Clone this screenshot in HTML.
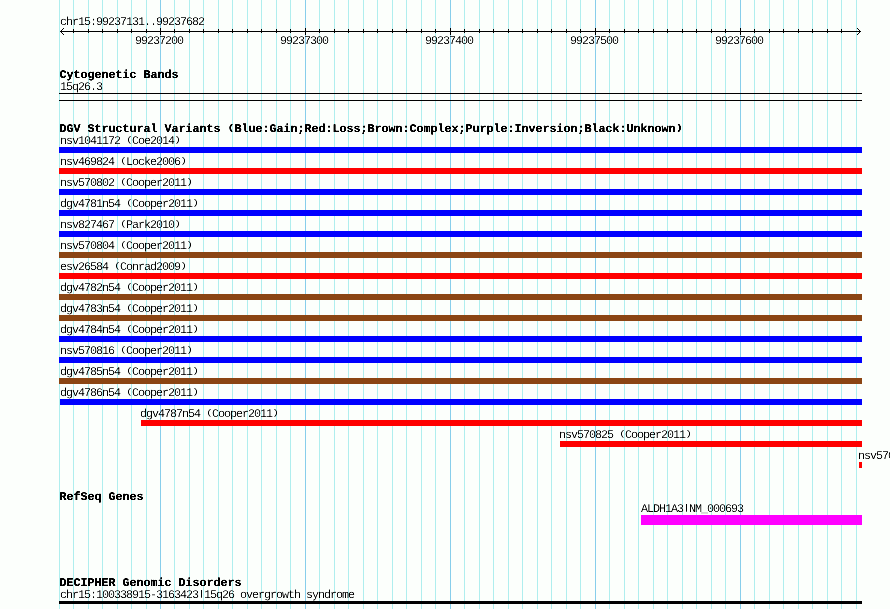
<!DOCTYPE html>
<html><head><meta charset="utf-8"><style>
html,body{margin:0;padding:0}
body{width:890px;height:609px;overflow:hidden;position:relative;background:#fcfffc;text-rendering:geometricPrecision}
svg{position:absolute;left:0;top:0}
.s,.b{position:absolute;white-space:pre;line-height:14px;color:#000;transform-origin:0 0}
.p{display:inline-block;transform:scaleY(0.72);transform-origin:50% 4.5px}
#ts,#tb{position:absolute;left:0;top:0;width:890px;height:609px}
#ts{filter:url(#ths)}
#tb{filter:url(#thb)}
.s{font:11.75px/14px "Liberation Mono",monospace;letter-spacing:-1.05px}
.b{font:bold 11.75px/14px "Liberation Mono",monospace;letter-spacing:-0.05px}
</style></head><body>
<svg width="890" height="609" shape-rendering="crispEdges">
<rect x="59" y="0" width="1" height="609" fill="#afeeee"/>
<rect x="73" y="0" width="1" height="609" fill="#afeeee"/>
<rect x="88" y="0" width="1" height="609" fill="#afeeee"/>
<rect x="102" y="0" width="1" height="609" fill="#afeeee"/>
<rect x="117" y="0" width="1" height="609" fill="#afeeee"/>
<rect x="131" y="0" width="1" height="609" fill="#afeeee"/>
<rect x="146" y="0" width="1" height="609" fill="#afeeee"/>
<rect x="160" y="0" width="1" height="609" fill="#87ceeb"/>
<rect x="174" y="0" width="1" height="609" fill="#afeeee"/>
<rect x="189" y="0" width="1" height="609" fill="#afeeee"/>
<rect x="203" y="0" width="1" height="609" fill="#afeeee"/>
<rect x="218" y="0" width="1" height="609" fill="#afeeee"/>
<rect x="232" y="0" width="1" height="609" fill="#afeeee"/>
<rect x="247" y="0" width="1" height="609" fill="#afeeee"/>
<rect x="261" y="0" width="1" height="609" fill="#afeeee"/>
<rect x="276" y="0" width="1" height="609" fill="#afeeee"/>
<rect x="290" y="0" width="1" height="609" fill="#afeeee"/>
<rect x="305" y="0" width="1" height="609" fill="#87ceeb"/>
<rect x="319" y="0" width="1" height="609" fill="#afeeee"/>
<rect x="334" y="0" width="1" height="609" fill="#afeeee"/>
<rect x="348" y="0" width="1" height="609" fill="#afeeee"/>
<rect x="363" y="0" width="1" height="609" fill="#afeeee"/>
<rect x="377" y="0" width="1" height="609" fill="#afeeee"/>
<rect x="392" y="0" width="1" height="609" fill="#afeeee"/>
<rect x="406" y="0" width="1" height="609" fill="#afeeee"/>
<rect x="421" y="0" width="1" height="609" fill="#afeeee"/>
<rect x="435" y="0" width="1" height="609" fill="#afeeee"/>
<rect x="450" y="0" width="1" height="609" fill="#87ceeb"/>
<rect x="464" y="0" width="1" height="609" fill="#afeeee"/>
<rect x="479" y="0" width="1" height="609" fill="#afeeee"/>
<rect x="493" y="0" width="1" height="609" fill="#afeeee"/>
<rect x="508" y="0" width="1" height="609" fill="#afeeee"/>
<rect x="522" y="0" width="1" height="609" fill="#afeeee"/>
<rect x="537" y="0" width="1" height="609" fill="#afeeee"/>
<rect x="551" y="0" width="1" height="609" fill="#afeeee"/>
<rect x="566" y="0" width="1" height="609" fill="#afeeee"/>
<rect x="580" y="0" width="1" height="609" fill="#afeeee"/>
<rect x="595" y="0" width="1" height="609" fill="#87ceeb"/>
<rect x="609" y="0" width="1" height="609" fill="#afeeee"/>
<rect x="624" y="0" width="1" height="609" fill="#afeeee"/>
<rect x="638" y="0" width="1" height="609" fill="#afeeee"/>
<rect x="653" y="0" width="1" height="609" fill="#afeeee"/>
<rect x="667" y="0" width="1" height="609" fill="#afeeee"/>
<rect x="682" y="0" width="1" height="609" fill="#afeeee"/>
<rect x="696" y="0" width="1" height="609" fill="#afeeee"/>
<rect x="711" y="0" width="1" height="609" fill="#afeeee"/>
<rect x="725" y="0" width="1" height="609" fill="#afeeee"/>
<rect x="740" y="0" width="1" height="609" fill="#87ceeb"/>
<rect x="754" y="0" width="1" height="609" fill="#afeeee"/>
<rect x="769" y="0" width="1" height="609" fill="#afeeee"/>
<rect x="783" y="0" width="1" height="609" fill="#afeeee"/>
<rect x="798" y="0" width="1" height="609" fill="#afeeee"/>
<rect x="812" y="0" width="1" height="609" fill="#afeeee"/>
<rect x="827" y="0" width="1" height="609" fill="#afeeee"/>
<rect x="841" y="0" width="1" height="609" fill="#afeeee"/>
<rect x="856" y="0" width="1" height="609" fill="#afeeee"/>
<rect x="60" y="31" width="801" height="1" fill="#000"/>
<rect x="60" y="31" width="1" height="1" fill="#000"/>
<rect x="60" y="31" width="1" height="1" fill="#000"/>
<rect x="860" y="31" width="1" height="1" fill="#000"/>
<rect x="860" y="31" width="1" height="1" fill="#000"/>
<rect x="61" y="30" width="1" height="1" fill="#000"/>
<rect x="61" y="32" width="1" height="1" fill="#000"/>
<rect x="859" y="30" width="1" height="1" fill="#000"/>
<rect x="859" y="32" width="1" height="1" fill="#000"/>
<rect x="62" y="29" width="1" height="1" fill="#000"/>
<rect x="62" y="33" width="1" height="1" fill="#000"/>
<rect x="858" y="29" width="1" height="1" fill="#000"/>
<rect x="858" y="33" width="1" height="1" fill="#000"/>
<rect x="63" y="28" width="1" height="1" fill="#000"/>
<rect x="63" y="34" width="1" height="1" fill="#000"/>
<rect x="857" y="28" width="1" height="1" fill="#000"/>
<rect x="857" y="34" width="1" height="1" fill="#000"/>
<rect x="73" y="29" width="1" height="4" fill="#000"/>
<rect x="88" y="29" width="1" height="4" fill="#000"/>
<rect x="102" y="29" width="1" height="4" fill="#000"/>
<rect x="117" y="29" width="1" height="4" fill="#000"/>
<rect x="131" y="29" width="1" height="4" fill="#000"/>
<rect x="146" y="29" width="1" height="4" fill="#000"/>
<rect x="160" y="28" width="1" height="7" fill="#000"/>
<rect x="174" y="29" width="1" height="4" fill="#000"/>
<rect x="189" y="29" width="1" height="4" fill="#000"/>
<rect x="203" y="29" width="1" height="4" fill="#000"/>
<rect x="218" y="29" width="1" height="4" fill="#000"/>
<rect x="232" y="29" width="1" height="4" fill="#000"/>
<rect x="247" y="29" width="1" height="4" fill="#000"/>
<rect x="261" y="29" width="1" height="4" fill="#000"/>
<rect x="276" y="29" width="1" height="4" fill="#000"/>
<rect x="290" y="29" width="1" height="4" fill="#000"/>
<rect x="305" y="28" width="1" height="7" fill="#000"/>
<rect x="319" y="29" width="1" height="4" fill="#000"/>
<rect x="334" y="29" width="1" height="4" fill="#000"/>
<rect x="348" y="29" width="1" height="4" fill="#000"/>
<rect x="363" y="29" width="1" height="4" fill="#000"/>
<rect x="377" y="29" width="1" height="4" fill="#000"/>
<rect x="392" y="29" width="1" height="4" fill="#000"/>
<rect x="406" y="29" width="1" height="4" fill="#000"/>
<rect x="421" y="29" width="1" height="4" fill="#000"/>
<rect x="435" y="29" width="1" height="4" fill="#000"/>
<rect x="450" y="28" width="1" height="7" fill="#000"/>
<rect x="464" y="29" width="1" height="4" fill="#000"/>
<rect x="479" y="29" width="1" height="4" fill="#000"/>
<rect x="493" y="29" width="1" height="4" fill="#000"/>
<rect x="508" y="29" width="1" height="4" fill="#000"/>
<rect x="522" y="29" width="1" height="4" fill="#000"/>
<rect x="537" y="29" width="1" height="4" fill="#000"/>
<rect x="551" y="29" width="1" height="4" fill="#000"/>
<rect x="566" y="29" width="1" height="4" fill="#000"/>
<rect x="580" y="29" width="1" height="4" fill="#000"/>
<rect x="595" y="28" width="1" height="7" fill="#000"/>
<rect x="609" y="29" width="1" height="4" fill="#000"/>
<rect x="624" y="29" width="1" height="4" fill="#000"/>
<rect x="638" y="29" width="1" height="4" fill="#000"/>
<rect x="653" y="29" width="1" height="4" fill="#000"/>
<rect x="667" y="29" width="1" height="4" fill="#000"/>
<rect x="682" y="29" width="1" height="4" fill="#000"/>
<rect x="696" y="29" width="1" height="4" fill="#000"/>
<rect x="711" y="29" width="1" height="4" fill="#000"/>
<rect x="725" y="29" width="1" height="4" fill="#000"/>
<rect x="740" y="28" width="1" height="7" fill="#000"/>
<rect x="754" y="29" width="1" height="4" fill="#000"/>
<rect x="769" y="29" width="1" height="4" fill="#000"/>
<rect x="783" y="29" width="1" height="4" fill="#000"/>
<rect x="798" y="29" width="1" height="4" fill="#000"/>
<rect x="812" y="29" width="1" height="4" fill="#000"/>
<rect x="827" y="29" width="1" height="4" fill="#000"/>
<rect x="841" y="29" width="1" height="4" fill="#000"/>
<rect x="59" y="93" width="803" height="1" fill="#000"/>
<rect x="59" y="100" width="803" height="1" fill="#000"/>
<rect x="59" y="147" width="803" height="6" fill="#0000ff"/>
<rect x="59" y="168" width="803" height="6" fill="#ff0000"/>
<rect x="59" y="189" width="803" height="6" fill="#0000ff"/>
<rect x="59" y="210" width="803" height="6" fill="#0000ff"/>
<rect x="59" y="231" width="803" height="6" fill="#0000ff"/>
<rect x="59" y="252" width="803" height="6" fill="#8b4513"/>
<rect x="59" y="273" width="803" height="6" fill="#ff0000"/>
<rect x="59" y="294" width="803" height="6" fill="#8b4513"/>
<rect x="59" y="315" width="803" height="6" fill="#8b4513"/>
<rect x="59" y="336" width="803" height="6" fill="#0000ff"/>
<rect x="59" y="357" width="803" height="6" fill="#0000ff"/>
<rect x="59" y="378" width="803" height="6" fill="#8b4513"/>
<rect x="60" y="399" width="802" height="6" fill="#0000ff"/>
<rect x="141" y="420" width="721" height="6" fill="#ff0000"/>
<rect x="560" y="441" width="302" height="6" fill="#ff0000"/>
<rect x="859" y="462" width="3" height="6" fill="#ff0000"/>
<rect x="641" y="515" width="221" height="10" fill="#ff00ff"/>
<rect x="59" y="601" width="803" height="3" fill="#000"/>
</svg>
<svg width="0" height="0" style="position:absolute"><filter id="ths" x="0" y="0" width="100%" height="100%"><feComponentTransfer><feFuncA type="linear" slope="1.3" intercept="-0.2"/></feComponentTransfer></filter><filter id="thb" x="0" y="0" width="100%" height="100%"><feComponentTransfer><feFuncA type="linear" slope="2.2" intercept="-0.25"/></feComponentTransfer></filter></svg>
<div id="ts">
<div class="s" style="left:60px;top:15px">chr15:99237131..99237682</div>
<div class="s" style="left:135px;top:34px">99237200</div>
<div class="s" style="left:280px;top:34px">99237300</div>
<div class="s" style="left:425px;top:34px">99237400</div>
<div class="s" style="left:570px;top:34px">99237500</div>
<div class="s" style="left:715px;top:34px">99237600</div>
<div class="s" style="left:60px;top:80px">15q26.3</div>
<div class="s" style="left:60px;top:134px">nsv1041172 <span class="p">(</span>Coe2014<span class="p">)</span></div>
<div class="s" style="left:60px;top:155px">nsv469824 <span class="p">(</span>Locke2006<span class="p">)</span></div>
<div class="s" style="left:60px;top:176px">nsv570802 <span class="p">(</span>Cooper2011<span class="p">)</span></div>
<div class="s" style="left:60px;top:197px">dgv4781n54 <span class="p">(</span>Cooper2011<span class="p">)</span></div>
<div class="s" style="left:60px;top:218px">nsv827467 <span class="p">(</span>Park2010<span class="p">)</span></div>
<div class="s" style="left:60px;top:239px">nsv570804 <span class="p">(</span>Cooper2011<span class="p">)</span></div>
<div class="s" style="left:60px;top:260px">esv26584 <span class="p">(</span>Conrad2009<span class="p">)</span></div>
<div class="s" style="left:60px;top:281px">dgv4782n54 <span class="p">(</span>Cooper2011<span class="p">)</span></div>
<div class="s" style="left:60px;top:302px">dgv4783n54 <span class="p">(</span>Cooper2011<span class="p">)</span></div>
<div class="s" style="left:60px;top:323px">dgv4784n54 <span class="p">(</span>Cooper2011<span class="p">)</span></div>
<div class="s" style="left:60px;top:344px">nsv570816 <span class="p">(</span>Cooper2011<span class="p">)</span></div>
<div class="s" style="left:60px;top:365px">dgv4785n54 <span class="p">(</span>Cooper2011<span class="p">)</span></div>
<div class="s" style="left:60px;top:386px">dgv4786n54 <span class="p">(</span>Cooper2011<span class="p">)</span></div>
<div class="s" style="left:140px;top:407px">dgv4787n54 <span class="p">(</span>Cooper2011<span class="p">)</span></div>
<div class="s" style="left:559px;top:428px">nsv570825 <span class="p">(</span>Cooper2011<span class="p">)</span></div>
<div class="s" style="left:858px;top:449px">nsv570826 <span class="p">(</span>Cooper2011<span class="p">)</span></div>
<div class="s" style="left:641px;top:502px">ALDH1A3<span class="p">|</span>NM_000693</div>
<div class="s" style="left:60px;top:588px">chr15:100338915-3163423<span class="p">|</span>15q26 overgrowth syndrome</div>
</div>
<div id="tb">
<div class="b" style="left:59.5px;top:68px">Cytogenetic Bands</div>
<div class="b" style="left:59.5px;top:122px">DGV Structural Variants <span class="p">(</span>Blue:Gain;Red:Loss;Brown:Complex;Purple:Inversion;Black:Unknown<span class="p">)</span></div>
<div class="b" style="left:59.5px;top:490px">RefSeq Genes</div>
<div class="b" style="left:59.5px;top:576px">DECIPHER Genomic Disorders</div>
</div>
</body></html>
